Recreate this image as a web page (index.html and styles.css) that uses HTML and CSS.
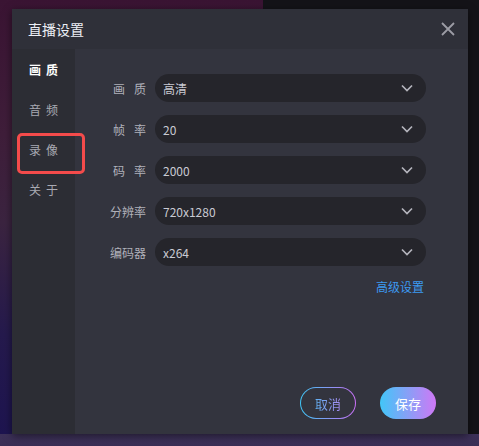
FILE: index.html
```html
<!DOCTYPE html>
<html lang="zh-CN">
<head>
    <meta charset="UTF-8">
    <meta name="viewport" content="width=device-width, initial-scale=1.0">
    <title>直播设置</title>
    <link rel="stylesheet" href="styles.css">
</head>
<body>
    <div class="dialog">
        <div class="dialog-header">
            <span class="dialog-title">直播设置</span>
            <svg class="close" width="14" height="14" viewBox="0 0 14 14">
                <path d="M1 1L13 13M13 1L1 13" stroke="#9c9ca5" stroke-width="1.8" fill="none"/>
            </svg>
        </div>
        <div class="dialog-body">
            <ul class="side-nav">
                <li class="nav-item active">画质</li>
                <li class="nav-item">音频</li>
                <li class="nav-item marked">录像</li>
                <li class="nav-item">关于</li>
            </ul>
            <div class="panel">
                <form class="form">
                    <div class="row">
                        <label class="label spaced">画质</label>
                        <div class="select"><span>高清</span><svg width="12" height="8" viewBox="0 0 12 8"><path d="M1 1.5L6 6.5L11 1.5" stroke="#b4b4bc" stroke-width="1.7" fill="none"/></svg></div>
                    </div>
                    <div class="row">
                        <label class="label spaced">帧率</label>
                        <div class="select"><span>20</span><svg width="12" height="8" viewBox="0 0 12 8"><path d="M1 1.5L6 6.5L11 1.5" stroke="#b4b4bc" stroke-width="1.7" fill="none"/></svg></div>
                    </div>
                    <div class="row">
                        <label class="label spaced">码率</label>
                        <div class="select"><span>2000</span><svg width="12" height="8" viewBox="0 0 12 8"><path d="M1 1.5L6 6.5L11 1.5" stroke="#b4b4bc" stroke-width="1.7" fill="none"/></svg></div>
                    </div>
                    <div class="row">
                        <label class="label">分辨率</label>
                        <div class="select"><span>720x1280</span><svg width="12" height="8" viewBox="0 0 12 8"><path d="M1 1.5L6 6.5L11 1.5" stroke="#b4b4bc" stroke-width="1.7" fill="none"/></svg></div>
                    </div>
                    <div class="row">
                        <label class="label">编码器</label>
                        <div class="select"><span>x264</span><svg width="12" height="8" viewBox="0 0 12 8"><path d="M1 1.5L6 6.5L11 1.5" stroke="#b4b4bc" stroke-width="1.7" fill="none"/></svg></div>
                    </div>
                    <a class="advanced">高级设置</a>
                </form>
                <div class="footer">
                    <button class="btn btn-cancel"><span>取消</span></button>
                    <button class="btn btn-save">保存</button>
                </div>
            </div>
        </div>
    </div>
</body>
</html>
```

FILE: styles.css
```css
* {
    box-sizing: border-box;
}
body {
    margin: 0;
    width: 479px;
    height: 446px;
    padding: 9px 11px 0 12px;
    overflow: hidden;
    font-family: "Noto Sans CJK SC", "Noto Sans", sans-serif;
    background:
        linear-gradient(#3d3159, #3a2e55) left bottom / 100% 12px no-repeat,
        linear-gradient(180deg, #3a1433 0%, #3f1e3a 30%, #3b2440 50%, #251a4d 75%, #1d1450 100%) left top / 263px 100% no-repeat,
        #141318;
}
.dialog {
    width: 456px;
    height: 425px;
    display: flex;
    flex-direction: column;
    background-color: #33343e;
    box-shadow: 0 2px 8px rgba(0, 0, 0, 0.5);
}
.dialog-header {
    height: 40px;
    flex-shrink: 0;
    display: flex;
    align-items: center;
    justify-content: space-between;
    padding: 0 13px 0 16px;
    background-color: #2f3039;
}
.dialog-title {
    color: #eceef5;
    font-size: 14px;
}
.dialog-body {
    flex: 1;
    display: flex;
}
.side-nav {
    width: 63px;
    flex-shrink: 0;
    margin: 0;
    padding: 1px 0 0;
    list-style: none;
    background-color: #2c2d34;
}
.nav-item {
    position: relative;
    height: 40px;
    line-height: 40px;
    padding-left: 17px;
    font-size: 12px;
    letter-spacing: 5px;
    color: #a8a9b2;
}
.nav-item.active {
    color: #ffffff;
    font-weight: bold;
}
.nav-item.marked::after {
    content: "";
    position: absolute;
    left: 5px;
    top: 3px;
    width: 62px;
    height: 35px;
    border: 3px solid #f44b4b;
    border-radius: 5px;
}
.panel {
    flex: 1;
    display: flex;
    flex-direction: column;
}
.form {
    display: flex;
    flex-direction: column;
    gap: 13px;
    padding: 25px 42px 0 34px;
}
.row {
    display: flex;
    align-items: center;
    gap: 9px;
}
.label {
    width: 37px;
    flex-shrink: 0;
    white-space: nowrap;
    text-align: right;
    font-size: 12px;
    color: #b0b1ba;
}
.label.spaced {
    width: 46px;
    letter-spacing: 9px;
    margin-right: -9px;
}
.select {
    flex: 1;
    height: 28px;
    border-radius: 14px;
    background-color: #25252b;
    display: flex;
    align-items: center;
    justify-content: space-between;
    padding: 0 13px 0 8px;
    font-size: 12px;
    color: #c9cad3;
}
.advanced {
    align-self: flex-end;
    margin-right: 2px;
    margin-top: -1px;
    font-size: 12px;
    color: #3c9af2;
    cursor: pointer;
}
.footer {
    margin-top: auto;
    display: flex;
    justify-content: flex-end;
    gap: 24px;
    padding: 0 32px 15px;
}
.btn {
    width: 56px;
    height: 32px;
    border-radius: 16px;
    font-family: inherit;
    font-size: 13px;
    cursor: pointer;
}
.btn-cancel {
    border: 1px solid transparent;
    background:
        linear-gradient(#33343e, #33343e) padding-box,
        linear-gradient(90deg, #3fc4f4, #c86ff4) border-box;
}
.btn-cancel span {
    background: linear-gradient(90deg, #5fb0f2, #a98cf3);
    -webkit-background-clip: text;
    background-clip: text;
    color: transparent;
}
.btn-save {
    border: none;
    color: #ffffff;
    background: linear-gradient(90deg, #42c6f8, #cf78f5);
}
```
